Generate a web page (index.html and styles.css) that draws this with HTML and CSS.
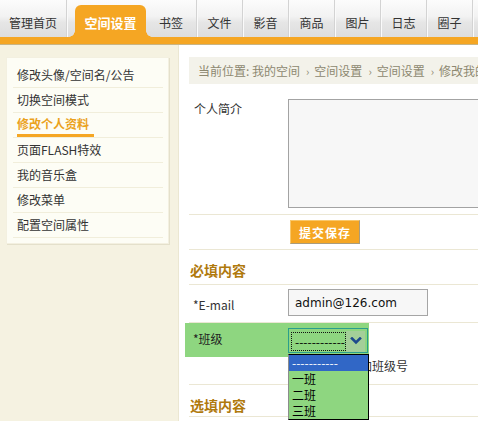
FILE: index.html
```html
<!DOCTYPE html>
<html lang="zh-CN">
<head>
<meta charset="utf-8">
<title>修改个人资料</title>
<link rel="stylesheet" href="styles.css">
</head>
<body>
<div class="page">
  <header class="topnav">
    <nav class="tabs">
      <a class="tab tab-home">管理首页</a>
      <a class="tab tab-active">空间设置</a>
      <a class="tab tab-wide">书签</a>
      <a class="tab">文件</a>
      <a class="tab">影音</a>
      <a class="tab">商品</a>
      <a class="tab">图片</a>
      <a class="tab">日志</a>
      <a class="tab">圈子</a>
      <a class="tab">相册</a>
    </nav>
    <div class="tabbar"></div>
  </header>
  <div class="layout">
    <aside class="sidebar">
      <ul class="menu">
        <li class="menu-item">修改头像/空间名/公告</li>
        <li class="menu-item">切换空间模式</li>
        <li class="menu-item menu-active"><span class="menu-mark">修改个人资料</span></li>
        <li class="menu-item">页面FLASH特效</li>
        <li class="menu-item">我的音乐盒</li>
        <li class="menu-item">修改菜单</li>
        <li class="menu-item">配置空间属性</li>
      </ul>
    </aside>
    <main class="content">
      <div class="crumb">当前位置: 我的空间<span class="sep">›</span>空间设置<span class="sep">›</span>空间设置<span class="sep">›</span>修改我的资料</div>

      <div class="row row-intro">
        <span class="label label-intro">个人简介</span>
        <textarea class="intro-input"></textarea>
      </div>

      <div class="row row-submit">
        <button class="btn-save" type="button">提交保存</button>
      </div>

      <h3 class="section">必填内容</h3>

      <div class="row row-email">
        <span class="label label-email">*E-mail</span>
        <input class="email-input" type="text" value="admin@126.com">
      </div>

      <div class="row row-class">
        <div class="field-hl">
          <span class="label-class">*班级</span>
          <div class="select-wrap">
            <div class="select-box">
              <span class="select-focus">------------</span>
              <span class="select-arrow">
                <svg width="12" height="8" viewBox="0 0 12 8"><polyline points="2,1.5 6,5.5 10,1.5" fill="none" stroke="#1d4a8c" stroke-width="2.6" stroke-linecap="square"/></svg>
              </span>
            </div>
            <ul class="select-list">
              <li class="opt opt-selected">-----------</li>
              <li class="opt">一班</li>
              <li class="opt">二班</li>
              <li class="opt">三班</li>
            </ul>
          </div>
        </div>
        <div class="hint">选择班级或添加班级号</div>
      </div>

      <h3 class="section section-alt">选填内容</h3>
    </main>
  </div>
</div>
</body>
</html>
```

FILE: styles.css
```css
html, body {
  margin: 0;
  padding: 0;
}
body {
  background: #fff;
  overflow: hidden;
  font-family: "Noto Sans CJK SC", "Noto Sans", sans-serif;
  font-size: 12px;
  color: #333;
}
* {
  box-sizing: border-box;
}
.page {
  width: 660px;
}

/* ---------- top nav ---------- */
.tabs {
  display: flex;
  height: 37px;
  background: linear-gradient(#fcfcfc 0%, #f2f2f2 45%, #e6e6e6 60%, #dddddd 100%);
}
.tab {
  display: flex;
  align-items: center;
  justify-content: center;
  width: 46px;
  padding-top: 7px;
  color: #333;
  font-size: 12px;
  border-right: 1px solid #d3d3d3;
  box-shadow: 1px 0 0 #fafafa;
  cursor: pointer;
}
.tab-home {
  width: 67px;
  margin-right: 8px;
}
.tab-wide {
  width: 51px;
}
.tab-active {
  position: relative;
  width: 71px;
  margin-top: 5px;
  padding-top: 2px;
  border-right: none;
  box-shadow: none;
  border-radius: 6px 6px 0 0;
  background: #f5a623;
  color: #fff;
  font-weight: bold;
  font-size: 13px;
}
.tab-active::before,
.tab-active::after {
  content: "";
  position: absolute;
  bottom: 0;
  width: 6px;
  height: 6px;
}
.tab-active::before {
  left: -6px;
  background: radial-gradient(circle at 0 0, transparent 5.5px, #f5a623 6px);
}
.tab-active::after {
  right: -6px;
  background: radial-gradient(circle at 100% 0, transparent 5.5px, #f5a623 6px);
}
.tabbar {
  height: 8px;
  background: #f5a623;
  border-bottom: 1px solid #c9b483;
}

/* ---------- layout ---------- */
.layout {
  display: flex;
  height: 376px;
  overflow: hidden;
}
.sidebar {
  width: 179px;
  flex: none;
  background: #f5f2e1;
  border-right: 1px solid #ebe7d2;
  padding-top: 12px;
}
.menu {
  list-style: none;
  margin: 0 0 0 6px;
  width: 163px;
  padding: 5px 5px 5px 6px;
  background: #fdfdf5;
  border: 1px solid #f3f0e0;
  box-shadow: 1px 1px 0 #e4e0cb;
}
.menu-item {
  height: 25px;
  line-height: 24px;
  padding-left: 4px;
  border-bottom: 1px solid #f1eedb;
  color: #333;
  white-space: nowrap;
}
.menu-active {
  color: #eba21d;
  font-weight: bold;
}
.menu-mark {
  display: inline-block;
  height: 24px;
  line-height: 21px;
  padding-right: 5px;
  border-bottom: 3px solid #f5a623;
  vertical-align: top;
}

/* ---------- content ---------- */
.content {
  flex: 1;
  padding: 12px 0 0 10px;
}
.crumb {
  height: 27px;
  line-height: 27px;
  padding-left: 9px;
  background: #f3f2ea;
  color: #8d8870;
  white-space: nowrap;
}
.sep {
  margin: 0 5px 0 6px;
  font-size: 11px;
}
.row {
  display: flex;
  border-bottom: 1px solid #ebe7d4;
}
.label {
  flex: none;
  width: 99px;
  padding-left: 5px;
  line-height: 16px;
  color: #333;
}
.row-intro {
  padding: 15px 0 6px;
}
.label-intro {
  margin-top: 2px;
}
.intro-input {
  display: block;
  width: 320px;
  height: 109px;
  margin: 0;
  border: 1px solid #a3a3a3;
  background: #f7f7f7;
  resize: none;
  outline: none;
}
.row-submit {
  padding: 5px 0 5px 101px;
}
.btn-save {
  width: 70px;
  height: 24px;
  margin: 0;
  padding: 0;
  background: #f5a623;
  border: 1px solid;
  border-color: #f9c76a #a99c7c #a99c7c #f9c76a;
  color: #fff;
  font-family: "Noto Sans CJK SC", sans-serif;
  font-size: 12px;
  font-weight: bold;
  letter-spacing: 1px;
}
.section {
  margin: 0;
  padding: 12px 0 6px 1px;
  line-height: 16px;
  font-size: 14px;
  font-weight: bold;
  color: #b07a0e;
  border-bottom: 1px solid #ebe7d4;
}
.section-alt {
  padding-bottom: 3px;
}
.row-email {
  padding: 4px 0 6px;
}
.label-email {
  margin-top: 8px;
  padding-left: 4px;
}
.email-input {
  width: 140px;
  height: 27px;
  margin: 0;
  padding: 0 6px;
  border: 1px solid #a5a5a5;
  background: #f7f7f7;
  font-family: "DejaVu Sans", sans-serif;
  font-size: 12px;
  color: #111;
  outline: none;
}
.row-class {
  flex-direction: column;
  padding-bottom: 10px;
}
.field-hl {
  display: flex;
  width: 184px;
  height: 34px;
  margin-left: -4px;
  background: #8ed680;
}
.label-class {
  width: 103px;
  padding-left: 8px;
  margin-top: 8px;
  line-height: 16px;
  color: #222;
}
.select-wrap {
  position: relative;
  margin-top: 5px;
}
.select-box {
  display: flex;
  align-items: center;
  width: 80px;
  height: 25px;
  padding: 2px 2px 0 2px;
  border: 1px solid #2a9e8c;
}
.select-focus {
  display: block;
  width: 55px;
  height: 19px;
  line-height: 17px;
  padding-left: 3px;
  border: 1px dotted #111;
  color: #000;
  overflow: hidden;
  white-space: nowrap;
}
.select-arrow {
  display: flex;
  align-items: center;
  justify-content: center;
  width: 19px;
  height: 21px;
  margin-top: -1px;
  background: rgba(190, 200, 185, 0.45);
}
.select-list {
  position: absolute;
  top: 26px;
  left: 0;
  width: 81px;
  margin: 0;
  padding: 0;
  list-style: none;
  background: #8ed680;
  border: 1px solid #000;
  border-left-color: #8c8c8c;
}
.opt {
  height: 16px;
  line-height: 16px;
  padding-left: 3px;
  color: #000;
  white-space: nowrap;
}
.opt-selected {
  background: #3167c6;
  color: #fff;
}
.hint {
  margin: 1px 0 0 99px;
  line-height: 16px;
  color: #333;
  white-space: nowrap;
}
```
